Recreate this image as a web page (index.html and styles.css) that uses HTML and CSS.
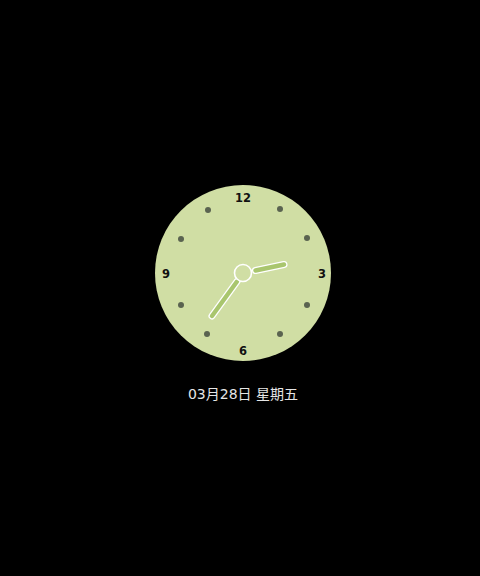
FILE: index.html
```html
<!DOCTYPE html>
<html>
<head>
<meta charset="utf-8">
<link rel="stylesheet" href="styles.css">
</head>
<body>
<div class="screen">
  <svg class="clock" width="180" height="180" viewBox="-90 -90 180 180">
    <circle class="face" cx="0" cy="0" r="88"/>
    <g class="marks">
      <circle cx="37" cy="-64" r="3"/>
      <circle cx="64" cy="-35" r="3"/>
      <circle cx="64" cy="32" r="3"/>
      <circle cx="37" cy="61" r="3"/>
      <circle cx="-36" cy="61" r="3"/>
      <circle cx="-62" cy="32" r="3"/>
      <circle cx="-62" cy="-34" r="3"/>
      <circle cx="-35" cy="-63" r="3"/>
    </g>
    <g class="nums">
      <text x="0" y="-71">12</text>
      <text x="79" y="5">3</text>
      <text x="0" y="82">6</text>
      <text x="-77" y="5">9</text>
    </g>
    <line class="hand-outline" x1="12.5" y1="-2.5" x2="41" y2="-8.5"/>
    <line class="hand-fill" x1="12.5" y1="-2.5" x2="41" y2="-8.5"/>
    <line class="hand-outline" x1="-6" y1="8.5" x2="-31" y2="43"/>
    <line class="hand-fill" x1="-6" y1="8.5" x2="-31" y2="43"/>
    <circle class="hub" cx="0" cy="0" r="8.5"/>
  </svg>
  <div class="date">03月28日 星期五</div>
</div>
</body>
</html>
```
FILE: styles.css
```css
html, body {
  margin: 0;
  padding: 0;
  background: #000;
}
.screen {
  width: 480px;
  height: 576px;
  display: flex;
  flex-direction: column;
  align-items: center;
  padding-top: 183px;
  padding-left: 6px;
  box-sizing: border-box;
}
.clock {
  display: block;
}
.face {
  fill: #d0dea4;
}
.marks circle {
  fill: #5a6350;
}
.nums text {
  font-family: "DejaVu Sans", sans-serif;
  font-weight: bold;
  font-size: 11.5px;
  fill: #111;
  text-anchor: middle;
}
.hand-outline {
  stroke: #fff;
  stroke-width: 7;
  stroke-linecap: round;
}
.hand-fill {
  stroke: #a9c66e;
  stroke-width: 4.4;
  stroke-linecap: round;
}
.hub {
  fill: #d0dea4;
  stroke: #fff;
  stroke-width: 1.6;
}
.date {
  margin-top: 21px;
  font-family: "DejaVu Sans", "Noto Sans CJK SC", sans-serif;
  font-size: 14px;
  color: #e6e6e6;
  line-height: 20px;
}
```
